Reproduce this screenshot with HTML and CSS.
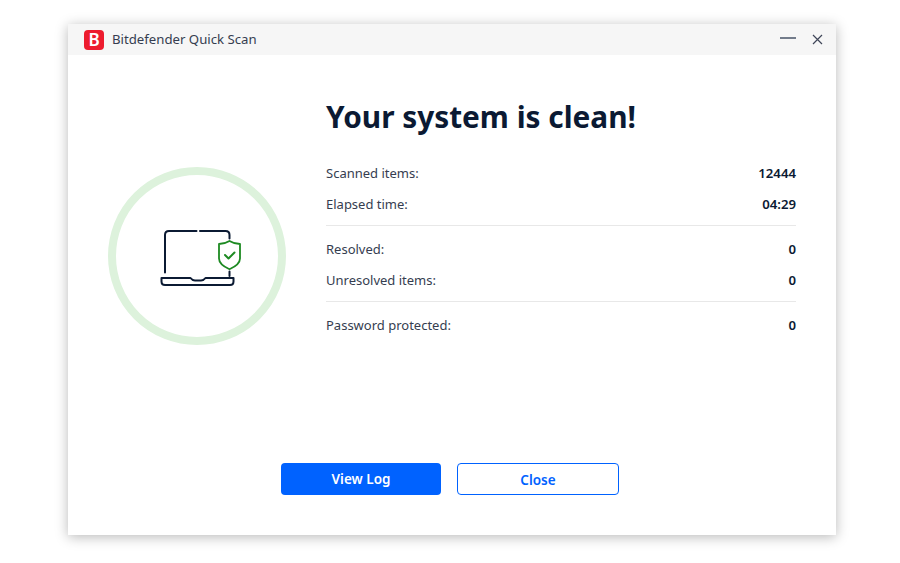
FILE: index.html
```html
<!DOCTYPE html>
<html lang="en">
<head>
    <meta charset="UTF-8">
    <meta name="viewport" content="width=device-width, initial-scale=1.0">
    <title>Bitdefender Quick Scan</title>
    <link rel="stylesheet" href="styles.css">
</head>
<body>
    <div class="window">
        <div class="titlebar">
            <div class="app-logo">B</div>
            <div class="app-title">Bitdefender Quick Scan</div>
            <svg class="win-btn-min" width="16" height="2" viewBox="0 0 16 2"><path d="M0 1H16" stroke="#1b2a44" stroke-width="1.2"/></svg>
            <svg class="win-btn-close" width="11" height="11" viewBox="0 0 11 11"><path d="M1 1L10 10M10 1L1 10" stroke="#3f4658" stroke-width="1.2" fill="none"/></svg>
        </div>

        <div class="content">
            <div class="status-ring">
                <svg width="80" height="60" viewBox="-3 -2.5 80 60" fill="none" class="status-icon">
                    <!-- laptop -->
                    <path d="M5 44V6.500C5 4 6.500 2.500 9 2.500H36.500M40 2.500H65.500C68 2.500 69.500 4 69.500 6.500V10M69.500 43V47.500" stroke="#0b1a33" stroke-width="2" stroke-linecap="round"/>
                    <path d="M1.500 49.500H30.500C32 51.500 33 52 35 52H41C43 52 44 51.500 45.500 49.500H73.500V53C73.500 55.300 72.500 56.500 70 56.500H5C2.500 56.500 1.500 55.300 1.500 53Z" stroke="#0b1a33" stroke-width="2" stroke-linejoin="round"/>
                    <!-- shield -->
                    <path d="M69.500 12.500C65.500 15 62.500 15.500 59 15.500V30C59 34.500 64.500 38.500 69.500 40.800C74.500 38.500 80 34.500 80 30V15.500C76.500 15.500 73.500 15 69.500 12.500Z" fill="#fff" stroke="#1d8a22" stroke-width="1.800" stroke-linejoin="round"/>
                    <path d="M65 26.500L68.500 30L74.500 24" stroke="#1d8a22" stroke-width="2" stroke-linecap="round" stroke-linejoin="round"/>
                </svg>
            </div>

            <div class="results">
                <h1>Your system is clean!</h1>

                <div class="stat-group">
                    <div class="stat-row"><span>Scanned items:</span><b>12444</b></div>
                    <div class="stat-row"><span>Elapsed time:</span><b>04:29</b></div>
                </div>
                <div class="stat-group">
                    <div class="stat-row"><span>Resolved:</span><b>0</b></div>
                    <div class="stat-row"><span>Unresolved items:</span><b>0</b></div>
                </div>
                <div class="stat-group">
                    <div class="stat-row"><span>Password protected:</span><b>0</b></div>
                </div>
            </div>
        </div>

        <div class="actions">
            <button class="btn btn-primary">View Log</button>
            <button class="btn btn-outline">Close</button>
        </div>
    </div>
</body>
</html>
```

FILE: styles.css
```css
body {
  box-sizing: border-box;
  height: 563px;
  margin: 0;
  padding: 24px 0 0 68px;
  background: #fff;
  font-family: "Noto Sans", "Open Sans", sans-serif;
}

.window {
  width: 768px;
  height: 511px;
  background: #fff;
  box-shadow: 0 2px 12px rgba(0, 0, 0, 0.28);
  display: flex;
  flex-direction: column;
}

/* Title bar */
.titlebar {
  height: 31px;
  background: #f6f6f6;
  display: flex;
  align-items: center;
  padding-left: 16px;
  padding-right: 13px;
}

.app-logo {
  width: 20px;
  height: 20px;
  border-radius: 4px;
  background: #ed1c2e;
  color: #fff;
  font-size: 17px;
  font-weight: 600;
  line-height: 20px;
  text-align: center;
}

.app-title {
  flex: 1;
  margin: -2px 0 0 8px;
  font-size: 13.2px;
  color: #353d50;
}

.win-btn-min {
  margin: -3px 16px 0 0;
}

/* Main content */
.content {
  display: flex;
  height: 380px;
}

.status-ring {
  box-sizing: border-box;
  width: 178px;
  height: 178px;
  margin: 112px 0 0 40px;
  border: 8px solid #ddf2dc;
  border-radius: 50%;
  display: flex;
  align-items: center;
  justify-content: center;
}

.status-icon {
  overflow: visible;
}

.results {
  width: 470px;
  margin-left: 40px;
  padding-top: 40px;
}

.results h1 {
  margin: 0 0 19px;
  font-size: 29.800px;
  line-height: 44px;
  font-weight: 700;
  color: #0b1a33;
}

.stat-group {
  border-bottom: 1px solid #e8e8e8;
  margin-bottom: 8px;
  padding-bottom: 5px;
}

.stat-group:last-child {
  border-bottom: none;
}

.stat-row {
  display: flex;
  justify-content: space-between;
  height: 31px;
  line-height: 31px;
  font-size: 13px;
  color: #353d50;
}

.stat-row b {
  color: #0b1a33;
  font-size: 13.200px;
  font-weight: 600;
}

/* Buttons */
.actions {
  display: flex;
  gap: 16px;
  padding: 28px 0 0 213px;
}

.btn {
  box-sizing: border-box;
  height: 32px;
  border-radius: 4px;
  font-family: inherit;
  font-size: 13.500px;
  font-weight: 600;
  cursor: pointer;
}

.btn-primary {
  width: 160px;
  background: #0062ff;
  color: #fff;
  border: none;
}

.btn-outline {
  width: 162px;
  padding-top: 2px;
  background: #fff;
  color: #0062ff;
  border: 1px solid #0062ff;
}
```
